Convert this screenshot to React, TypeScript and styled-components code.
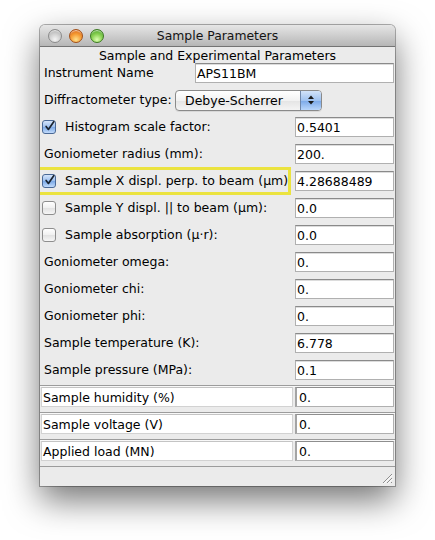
import React from "react";
import styled, { createGlobalStyle } from "styled-components";

const Global = createGlobalStyle`
  html, body { margin: 0; padding: 0; background: #ffffff; }
  body { font-family: "DejaVu Sans", "Liberation Sans", sans-serif; }
`;

const Page = styled.div`
  width: 435px;
  height: 540px;
  overflow: hidden;
  padding: 25px 0 0 40px;
  box-sizing: border-box;
`;

const Window = styled.div`
  width: 355px;
  background: #ebebeb;
  border-radius: 5px 5px 0 0;
  box-shadow: 0 14px 34px rgba(0, 0, 0, 0.55), 0 0 0 1px rgba(0, 0, 0, 0.3);
  font-size: 12.5px;
  color: #000;
  overflow: hidden;
`;

const TitleBar = styled.div`
  height: 21px;
  display: grid;
  grid-template-columns: 1fr auto 1fr;
  align-items: center;
  background: linear-gradient(#e6e6e6, #b6b6b6);
  border-bottom: 1px solid #747474;
  border-radius: 5px 5px 0 0;
`;

const Lights = styled.div`
  display: flex;
  gap: 7px;
  padding-left: 8px;
`;

const Light = styled.span<{ $c: "gray" | "orange" | "green" }>`
  width: 14px;
  height: 14px;
  border-radius: 50%;
  box-sizing: border-box;
  border: 1px solid
    ${(p) => (p.$c === "gray" ? "#8a8a8a" : p.$c === "orange" ? "#a24f17" : "#3b7a1f")};
  background: ${(p) =>
    p.$c === "gray"
      ? "radial-gradient(circle at 50% 78%, #f4f4f4 0%, #cfcfcf 50%, #a6a6a6 100%)"
      : p.$c === "orange"
      ? "radial-gradient(circle at 50% 80%, #ffe08a 0%, #f59a32 50%, #cf5815 100%)"
      : "radial-gradient(circle at 50% 80%, #dcffb0 0%, #86cf50 50%, #3a9620 100%)"};
  box-shadow: inset 0 2px 1px -1px rgba(255, 255, 255, 0.7);
`;

const Title = styled.div`
  font-size: 12.4px;
  color: #141414;
  white-space: nowrap;
`;

const Heading = styled.div`
  height: 16px;
  line-height: 17px;
  text-align: center;
  white-space: nowrap;
`;

const Panel = styled.div`
  display: flex;
  flex-direction: column;
  gap: 7px;
  padding-bottom: 5px;
`;

const Row = styled.div<{ $pl?: number; $highlight?: boolean }>`
  position: relative;
  height: 20px;
  display: flex;
  align-items: center;
  padding-left: ${(p) => p.$pl ?? 4}px;
  padding-right: 1px;
  ${(p) =>
    p.$highlight &&
    `
    &::after {
      content: "";
      position: absolute;
      left: -3px;
      top: -4px;
      width: 254px;
      height: 28px;
      box-sizing: border-box;
      border: 3px solid #ebe33f;
      pointer-events: none;
    }
  `}
`;

const Label = styled.span<{ $w?: number }>`
  flex: ${(p) => (p.$w ? "none" : "1")};
  width: ${(p) => (p.$w ? `${p.$w}px` : "auto")};
  white-space: nowrap;
  margin-top: -2px;
`;

const Entry = styled.div<{ $w: number }>`
  width: ${(p) => p.$w}px;
  height: 20px;
  box-sizing: border-box;
  margin-left: auto;
  background: #fff;
  border: 1px solid #b0b0b0;
  border-top-color: #8a8a8a;
  box-shadow: inset 0 1px 0 #dcdcdc;
  padding: 0 2px 0 1px;
  display: flex;
  align-items: center;
  white-space: nowrap;
  overflow: hidden;
`;

const Combo = styled.div`
  width: 147px;
  height: 21px;
  box-sizing: border-box;
  display: flex;
  border: 1px solid #8a8a8a;
  border-radius: 4px;
  overflow: hidden;
  background: linear-gradient(#ffffff, #f2f2f2 50%, #e4e4e4 51%, #f4f4f4);
  box-shadow: 0 1px 0 rgba(0, 0, 0, 0.08);
`;

const ComboText = styled.span`
  flex: 1;
  padding-left: 9px;
  display: flex;
  align-items: center;
`;

const Stepper = styled.span`
  width: 20px;
  border-left: 1px solid #6f87aa;
  background: linear-gradient(#d2e3f9, #9fc2f0 50%, #7aa8e8 51%, #b9d6fb);
  display: flex;
  align-items: center;
  justify-content: center;
`;

const Check = styled.span<{ $on?: boolean }>`
  width: 14px;
  height: 14px;
  box-sizing: border-box;
  margin-right: 9px;
  border-radius: 3px;
  border: 1px solid ${(p) => (p.$on ? "#4a6996" : "#8e8e8e")};
  background: ${(p) =>
    p.$on
      ? "linear-gradient(#d4e4fa, #9dc0ef 50%, #7aa8e6 51%, #c2dbfb)"
      : "linear-gradient(#ffffff, #f0f0f0 50%, #e2e2e2 51%, #f6f6f6)"};
  display: flex;
  align-items: center;
  justify-content: center;
  flex: none;
  overflow: visible;
`;

const Extra = styled.div`
  display: flex;
  flex-direction: column;
`;

const ExtraRow = styled.div`
  height: 20px;
  display: flex;
  gap: 2px;
  border-top: 1px solid #9c9c9c;
  box-shadow: inset 0 1px 0 #f8f8f8;
  padding: 1px 1px 5px 1px;
`;

const CellLabel = styled.div`
  width: 252px;
  box-sizing: border-box;
  background: #fff;
  border: 1px solid #d2d2d2;
  border-top-color: #c4c4c4;
  padding-left: 1px;
  display: flex;
  align-items: center;
  white-space: nowrap;
`;

const CellValue = styled.div`
  flex: 1;
  box-sizing: border-box;
  background: #fff;
  border: 1px solid #b0b0b0;
  border-top-color: #8e8e8e;
  border-left: 2px solid #a4a4a4;
  padding-left: 2px;
  display: flex;
  align-items: center;
`;

const StatusBar = styled.div`
  height: 17px;
  border-top: 1px solid #9c9c9c;
  display: flex;
  justify-content: flex-end;
  align-items: flex-end;
  padding: 0 2px 2px 0;
`;

const CheckMark = () => (
  <svg width="13" height="13" viewBox="0 0 13 13" style={{ marginTop: -2, marginLeft: 1 }}>
    <path d="M2.5 6.5 L5.2 10 L11.5 0.8" fill="none" stroke="#1c2530" strokeWidth="2" strokeLinecap="round" strokeLinejoin="round" />
  </svg>
);

const Arrows = () => (
  <svg width="8" height="12" viewBox="0 0 8 12">
    <path d="M4 1.5 L7 5 L1 5 Z" fill="#1a1a1a" />
    <path d="M4 10.5 L7 7 L1 7 Z" fill="#1a1a1a" />
  </svg>
);

const Grip = () => (
  <svg width="11" height="11" viewBox="0 0 11 11">
    <path d="M10 1 L1 10 M10 5 L5 10 M10 9 L9 10" stroke="#8e8e8e" strokeWidth="1" />
    <path d="M10.5 2 L2 10.5 M10.5 6 L6 10.5" stroke="#ffffff" strokeWidth="1" />
  </svg>
);

type Item =
  | { kind: "plain"; label: string; value: string }
  | { kind: "check"; label: string; value: string; on: boolean; hl?: boolean };

const items: Item[] = [
  { kind: "check", label: "Histogram scale factor:", value: "0.5401", on: true },
  { kind: "plain", label: "Goniometer radius (mm):", value: "200." },
  { kind: "check", label: "Sample X displ. perp. to beam (µm)", value: "4.28688489", on: true, hl: true },
  { kind: "check", label: "Sample Y displ. || to beam (µm):", value: "0.0", on: false },
  { kind: "check", label: "Sample absorption (µ·r):", value: "0.0", on: false },
  { kind: "plain", label: "Goniometer omega:", value: "0." },
  { kind: "plain", label: "Goniometer chi:", value: "0." },
  { kind: "plain", label: "Goniometer phi:", value: "0." },
  { kind: "plain", label: "Sample temperature (K):", value: "6.778" },
  { kind: "plain", label: "Sample pressure (MPa):", value: "0.1" },
];

const extras = [
  { label: "Sample humidity (%)", value: "0." },
  { label: "Sample voltage (V)", value: "0." },
  { label: "Applied load (MN)", value: "0." },
];

export default function App() {
  return (
    <Page>
      <Global />
      <Window>
        <TitleBar>
          <Lights>
            <Light $c="gray" />
            <Light $c="orange" />
            <Light $c="green" />
          </Lights>
          <Title>Sample Parameters</Title>
          <span />
        </TitleBar>
        <Heading>Sample and Experimental Parameters</Heading>
        <Panel>
          <Row>
            <Label>Instrument Name</Label>
            <Entry $w={199}>APS11BM</Entry>
          </Row>
          <Row>
            <Label $w={131}>Diffractometer type:</Label>
            <Combo>
              <ComboText>Debye-Scherrer</ComboText>
              <Stepper>
                <Arrows />
              </Stepper>
            </Combo>
          </Row>
          {items.map((it) =>
            it.kind === "check" ? (
              <Row key={it.label} $pl={2} $highlight={it.hl}>
                <Check $on={it.on}>{it.on && <CheckMark />}</Check>
                <Label>{it.label}</Label>
                <Entry $w={99}>{it.value}</Entry>
              </Row>
            ) : (
              <Row key={it.label}>
                <Label>{it.label}</Label>
                <Entry $w={99}>{it.value}</Entry>
              </Row>
            )
          )}
        </Panel>
        <Extra>
          {extras.map((e) => (
            <ExtraRow key={e.label}>
              <CellLabel>{e.label}</CellLabel>
              <CellValue>{e.value}</CellValue>
            </ExtraRow>
          ))}
        </Extra>
        <StatusBar>
          <Grip />
        </StatusBar>
      </Window>
    </Page>
  );
}
